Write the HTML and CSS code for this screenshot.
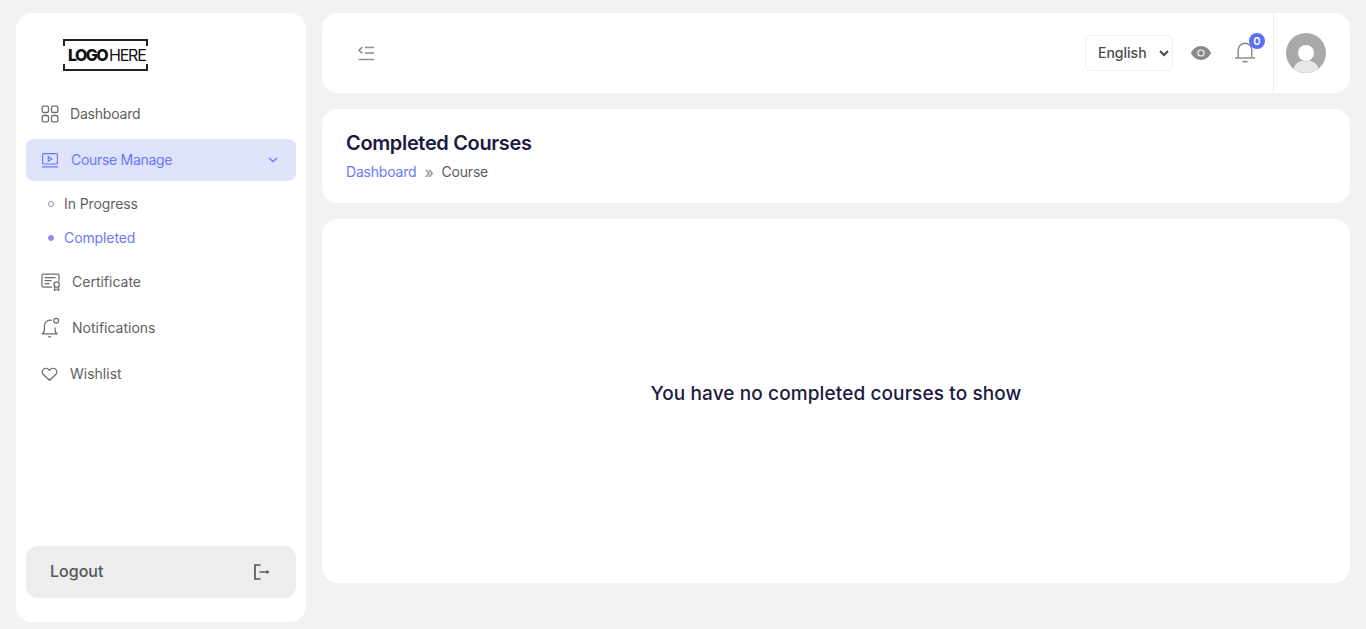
FILE: index.html
```html
<!DOCTYPE html>
<html lang="en">
  <head>
    <meta charset="UTF-8" />
    <meta name="viewport" content="width=device-width, initial-scale=1.0" />
    <title>Completed Courses</title>
    <link rel="stylesheet" href="styles.css">
  </head>
  <body>
    <div class="app">
      <aside class="sidebar">
        <div class="logo-wrap">
          <div class="logo">
            <span class="logo-bold">LOGO</span><span class="logo-thin">HERE</span>
          </div>
        </div>
        <ul class="menu">
          <li class="menu-item">
            <svg class="menu-icon" width="18" height="18" viewBox="0 0 18 18" fill="none" stroke="currentColor" stroke-width="1.3">
              <rect x="1.2" y="1.2" width="6.3" height="6.3" rx="1.6" />
              <rect x="10.5" y="1.2" width="6.3" height="6.3" rx="1.6" />
              <rect x="1.2" y="10.5" width="6.3" height="6.3" rx="1.6" />
              <rect x="10.5" y="10.5" width="6.3" height="6.3" rx="1.6" />
            </svg>
            <span class="label">Dashboard</span>
          </li>
          <li class="menu-item active">
            <svg class="menu-icon" width="18" height="18" viewBox="0 0 18 18" fill="none" stroke="currentColor" stroke-width="1.2">
              <rect x="1.6" y="2.6" width="14.8" height="10.4" rx="1" />
              <path d="M7.3 5.6v4.6l3.6-2.3z" />
              <path d="M1 15.9h16" />
            </svg>
            <span class="label">Course Manage</span>
            <svg class="chevron" width="10" height="6" viewBox="0 0 10 6" fill="none" stroke="currentColor" stroke-width="1.4">
              <path d="M1 1l4 3.6L9 1" />
            </svg>
          </li>
          <li>
            <ul class="submenu">
              <li class="sub-item"><span class="dot"></span><span class="label-sub">In Progress</span></li>
              <li class="sub-item current"><span class="dot"></span><span class="label-sub">Completed</span></li>
            </ul>
          </li>
          <li class="menu-item">
            <svg class="menu-icon wide" width="20" height="18" viewBox="0 0 20 18" fill="none" stroke="currentColor" stroke-width="1.2">
              <path d="M11 14.200H2.200A1.200 1.200 0 0 1 1 13V2.400a1.200 1.200 0 0 1 1.200-1.200h14.600A1.200 1.200 0 0 1 18 2.400V8.500" />
              <path d="M3.600 4.600h11M3.600 7.600h7M3.600 10.600h5" />
              <circle cx="15.600" cy="11.600" r="2.700" />
              <path d="M13.500 13.600v3.900l2.100-1.400 2.100 1.400v-3.900" />
            </svg>
            <span class="label">Certificate</span>
          </li>
          <li class="menu-item">
            <svg class="menu-icon bell-icon" width="22" height="22" viewBox="0 0 20 20" fill="none" stroke="currentColor" stroke-width="1.100">
              <path d="M10.800 3.200A5.200 5.200 0 0 0 4 8v3.500c0 2-1 3.300-2.400 3.900h14.300c-1.300-.6-2.200-1.900-2.200-3.900V9.600" />
              <circle cx="14.700" cy="3.400" r="2.200" />
              <path d="M7.600 17.400l1.200 1 1.200-1" />
            </svg>
            <span class="label">Notifications</span>
          </li>
          <li class="menu-item">
            <svg class="menu-icon heart" width="17" height="16" viewBox="0 0 18 17" fill="none" stroke="currentColor" stroke-width="1.400">
              <path d="M9 15.200L2.400 9.100a3.900 3.900 0 0 1 0-5.500 4 4 0 0 1 5.600 0l1 1 1-1a4 4 0 0 1 5.600 0 3.900 3.900 0 0 1 0 5.500z" />
            </svg>
            <span class="label">Wishlist</span>
          </li>
        </ul>
        <div class="logout">
          <span class="label-logout">Logout</span>
          <svg width="16" height="16" viewBox="0 0 16 16" fill="none" stroke="currentColor" stroke-width="1.700">
            <path d="M6.500 1H1v14h5.500" />
            <path d="M5.500 8h9" stroke-width="1.400" />
            <path d="M12.600 5.800l2.800 2.200-2.800 2.200z" fill="currentColor" stroke="none" />
          </svg>
        </div>
      </aside>

      <main class="main">
        <header class="topbar">
          <button class="toggle" type="button" aria-label="Toggle menu">
            <svg width="16" height="15" viewBox="0 0 16 15" fill="none" stroke="#8f8f8f" stroke-width="1.500">
              <path d="M4.400 1L1 4.200l3.400 3.200" />
              <path d="M7 1.500h9M7 7h9M0.500 13.600H16" />
            </svg>
          </button>
          <div class="topbar-right">
            <select class="lang">
              <option>English</option>
            </select>
            <svg class="eye" width="20" height="14" viewBox="0 0 20 14">
              <path fill="#8a8a8a" fill-rule="evenodd" d="M10 0c4.600 0 8.300 3 10 7-1.700 4-5.400 7-10 7S1.700 11 0 7c1.700-4 5.400-7 10-7zm0 3.400a3.600 3.600 0 1 0 0 7.200 3.600 3.600 0 0 0 0-7.200z" />
              <circle cx="10" cy="7" r="2.500" fill="#8a8a8a" />
            </svg>
            <div class="bell">
              <svg width="20" height="22" viewBox="0 0 20 22" fill="none" stroke="#858585" stroke-width="1.400">
                <path d="M3.200 16.500V9a6.800 6.800 0 0 1 13.600 0v7.500" />
                <path d="M0 17h20" />
                <path d="M7.500 20.600h5" stroke-width="1.700" />
              </svg>
              <span class="badge">0</span>
            </div>
            <div class="profile">
              <svg class="avatar" width="40" height="40" viewBox="0 0 40 40">
                <circle cx="20" cy="20" r="20" fill="#a8a9ab" />
                <circle cx="20" cy="20" r="8" fill="#fff" />
                <path d="M7.500 35.600C9 30 14 27.500 20 27.500s11 2.500 12.500 8.100A20 20 0 0 1 20 40a20 20 0 0 1-12.500-4.400z" fill="#e6e7e8" />
              </svg>
            </div>
          </div>
        </header>

        <section class="page-head">
          <h1>Completed Courses</h1>
          <div class="crumbs">
            <a href="#">Dashboard</a>
            <span class="sep">»</span>
            <span>Course</span>
          </div>
        </section>

        <section class="empty">
          <h2>You have no completed courses to show</h2>
        </section>
      </main>
    </div>
  </body>
</html>
```

FILE: styles.css
```css
* {
  margin: 0;
  padding: 0;
  box-sizing: border-box;
}

body {
  font-family: "Inter", "Liberation Sans", sans-serif;
  background-color: #f2f2f2;
  color: #5c5c5c;
  overflow: hidden;
}

ul {
  list-style: none;
}

.app {
  display: grid;
  grid-template-columns: 290px 1028px;
  grid-template-rows: 609px;
  column-gap: 16px;
  padding: 13px 16px 7px;
  height: 629px;
}

/* sidebar */
.sidebar {
  background-color: #fff;
  border-radius: 16px;
  padding: 0 10px 24px;
  display: flex;
  flex-direction: column;
}

.logo-wrap {
  height: 80px;
  padding: 26px 0 0 37px;
}

.logo {
  width: 85px;
  height: 32px;
  border-top: 2px solid #222;
  border-bottom: 2px solid #222;
  position: relative;
  display: flex;
  align-items: center;
  padding-left: 5px;
  color: #111;
  font-size: 16px;
  line-height: 1;
}

.logo::before,
.logo::after {
  content: "";
  position: absolute;
  top: 0;
  bottom: 0;
  width: 2px;
  background: linear-gradient(to bottom, #222 5px, transparent 5px, transparent 23px, #222 23px);
}

.logo::before {
  left: 0;
}

.logo::after {
  right: 0;
}

.logo-bold {
  font-weight: 800;
  letter-spacing: -1.6px;
}

.logo-thin {
  font-weight: 400;
  letter-spacing: -1.2px;
  margin-left: 2px;
}

.menu {
  display: flex;
  flex-direction: column;
  gap: 4px;
}

.menu-item {
  height: 42px;
  display: flex;
  align-items: center;
  padding: 0 15px;
  border-radius: 8px;
  font-size: 14px;
  color: #5f5f5f;
}

.menu-item .menu-icon {
  flex-shrink: 0;
  color: #6d6d6d;
}

.menu-item.active .menu-icon {
  color: inherit;
}

.menu-item.active {
  background-color: #dee2fb;
  color: #6a78f8;
  letter-spacing: -0.3px;
}

.menu-item:first-child {
  letter-spacing: -0.2px;
}

.label {
  margin-left: 11px;
  margin-bottom: 2px;
}

.menu-item.active .label {
  margin-left: 12px;
}

.menu-icon.bell-icon {
  margin-left: -1px;
}

.menu-icon.bell-icon + .label {
  margin-left: 10px;
}

.menu-icon.heart + .label {
  margin-left: 12px;
}

.chevron {
  margin-left: auto;
  margin-right: 3px;
}

.submenu {
  padding: 2px 0 2px 22px;
}

.sub-item {
  height: 34px;
  display: flex;
  align-items: center;
  font-size: 14px;
  letter-spacing: -0.1px;
  color: #5f5f5f;
}

.label-sub {
  margin-bottom: 2px;
}

.sub-item.current {
  color: #6a78f8;
}

.dot {
  width: 6px;
  height: 6px;
  border-radius: 50%;
  border: 1px solid #8d90a8;
  margin-right: 10px;
}

.current .dot {
  background-color: #9a86f0;
  border-color: #9a86f0;
}

.logout {
  margin-top: auto;
  height: 52px;
  background-color: #ededed;
  border-radius: 12px;
  padding: 0 26px 0 24px;
  display: flex;
  align-items: center;
  justify-content: space-between;
  font-size: 16px;
  font-weight: 500;
  color: #555;
}

.label-logout {
  margin-bottom: 2px;
}

/* main column */
.main {
  display: flex;
  flex-direction: column;
  gap: 16px;
}

.topbar {
  height: 80px;
  background-color: #fff;
  border-radius: 16px;
  display: flex;
  align-items: center;
  justify-content: space-between;
  padding: 0 24px 0 36px;
}

.toggle {
  border: none;
  background: none;
  display: flex;
}

.topbar-right {
  display: flex;
  align-items: center;
  height: 100%;
}

.lang {
  width: 88px;
  height: 36px;
  margin-top: -1px;
  padding-left: 8px;
  border: 1px solid #eee;
  border-radius: 6px;
  background-color: #fff;
  color: #4a4a4a;
  font-family: inherit;
  font-size: 14px;
  font-weight: 500;
}

.eye {
  margin-left: 18px;
}

.bell {
  position: relative;
  margin-left: 24px;
  display: flex;
  margin-top: -2px;
}

.badge {
  position: absolute;
  top: -8px;
  left: 14px;
  width: 16px;
  height: 16px;
  border-radius: 50%;
  background-color: #5a6ff5;
  color: #fff;
  font-size: 11px;
  font-weight: 600;
  line-height: 16px;
  text-align: center;
}

.profile {
  margin-left: 18px;
  height: 100%;
  border-left: 1px solid #ededed;
  padding-left: 12px;
  display: flex;
  align-items: center;
}

.page-head {
  height: 94px;
  background-color: #fff;
  border-radius: 16px;
  padding: 22px 24px 0;
}

.page-head h1 {
  font-size: 20px;
  font-weight: 600;
  letter-spacing: -0.35px;
  line-height: 25px;
  color: #1d1a3f;
}

.crumbs {
  margin-top: 7px;
  font-size: 14px;
  letter-spacing: -0.2px;
  line-height: 18px;
  color: #5c5c5c;
  display: flex;
  gap: 8px;
}

.crumbs a {
  color: #6a78f8;
  text-decoration: none;
}

.crumbs .sep {
  color: #8a8a8a;
  font-size: 16px;
}

.empty {
  height: 364px;
  background-color: #fff;
  border-radius: 16px;
  display: flex;
  align-items: center;
  justify-content: center;
}

.empty h2 {
  font-size: 19px;
  font-weight: 500;
  letter-spacing: 0.11px;
  color: #1d1a3f;
  margin-bottom: 16px;
}
```
